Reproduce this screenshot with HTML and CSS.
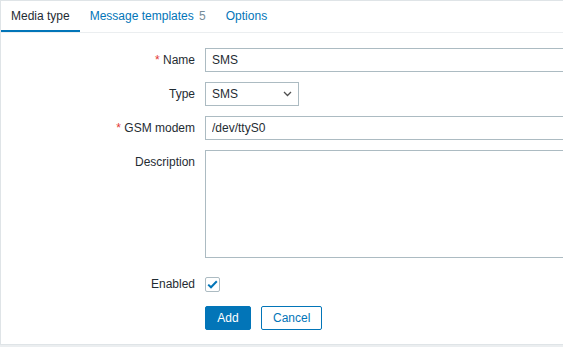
FILE: index.html
```html
<!DOCTYPE html>
<html lang="en">
<head>
    <meta charset="UTF-8">
    <title>Media type</title>
    <link rel="stylesheet" href="styles.css">
</head>
<body>
    <div class="container">
        <ul class="tabs">
            <li class="tab active">Media type</li>
            <li class="tab">Message templates <span class="count">5</span></li>
            <li class="tab">Options</li>
        </ul>
        <form class="form-grid">
            <label class="form-label"><span class="required">*</span> Name</label>
            <div class="form-field"><input type="text" class="text-input" value="SMS"></div>

            <label class="form-label">Type</label>
            <div class="form-field">
                <div class="select">
                    <span>SMS</span>
                    <svg width="9" height="6" viewBox="0 0 9 6"><path d="M1 1l3.5 3.5L8 1" fill="none" stroke="#4f4f4f" stroke-width="1.3"/></svg>
                </div>
            </div>

            <label class="form-label"><span class="required">*</span> GSM modem</label>
            <div class="form-field"><input type="text" class="text-input" value="/dev/ttyS0"></div>

            <label class="form-label label-top">Description</label>
            <div class="form-field"><textarea class="text-area"></textarea></div>

            <label class="form-label enabled-label">Enabled</label>
            <div class="form-field enabled-field">
                <span class="checkbox">
                    <svg width="11" height="9" viewBox="0 0 11 9"><path d="M1.2 4.6l2.8 2.7 5.8-6" fill="none" stroke="#0275b8" stroke-width="2"/></svg>
                </span>
            </div>

            <div></div>
            <div class="form-field buttons">
                <button type="button" class="btn btn-primary">Add</button>
                <button type="button" class="btn btn-alt">Cancel</button>
            </div>
        </form>
    </div>
</body>
</html>
```

FILE: styles.css
```css
* {
    margin: 0;
    padding: 0;
    box-sizing: border-box;
}

body {
    font-family: "Liberation Sans", Arial, sans-serif;
    font-size: 12px;
    color: #1f2c33;
    background-color: #ebeef0;
    overflow: hidden;
}

.container {
    width: 100%;
    height: 345px;
    background-color: #fff;
    border: 1px solid #dfe4e7;
    border-right: none;
    overflow: hidden;
}

.tabs {
    display: flex;
    list-style: none;
    height: 32px;
    border-bottom: 1px solid #ebeef0;
}

.tab {
    height: 31px;
    padding: 1px 10px 0;
    line-height: 28px;
    color: #0275b8;
    border-bottom: 2px solid transparent;
}

.tab.active {
    color: #1f2c33;
    border-bottom-color: #0275b8;
}

.tab .count {
    color: #768d99;
    margin-left: 2px;
}

.form-grid {
    display: grid;
    grid-template-columns: 194px 453px;
    column-gap: 10px;
    row-gap: 10px;
    padding-top: 15px;
}

.form-label {
    text-align: right;
    line-height: 24px;
}

.required {
    color: #e33734;
}

.text-input,
.text-area {
    display: block;
    width: 453px;
    height: 24px;
    padding: 0 6px;
    border: 1px solid #acbbc2;
    font-family: inherit;
    font-size: 12px;
    color: #1f2c33;
    background: #fff;
    outline: none;
}

.text-area {
    height: 108px;
    resize: none;
}

.select {
    display: flex;
    align-items: center;
    justify-content: space-between;
    width: 94px;
    height: 24px;
    padding: 0 6px;
    border: 1px solid #acbbc2;
}

.enabled-label,
.enabled-field {
    margin-top: 4px;
}

.enabled-field {
    display: flex;
    align-items: center;
    height: 24px;
}

.checkbox {
    display: flex;
    align-items: center;
    justify-content: center;
    width: 15px;
    height: 15px;
    border: 1px solid #acbbc2;
    border-radius: 2px;
}

.buttons {
    display: flex;
    gap: 10px;
}

.btn {
    height: 24px;
    padding: 0 11px;
    border-radius: 2px;
    font-family: inherit;
    font-size: 12px;
    cursor: pointer;
}

.btn-primary {
    background-color: #0275b8;
    border: 1px solid #0275b8;
    color: #fff;
    width: 46px;
}

.btn-alt {
    background-color: #fff;
    border: 1px solid #0275b8;
    color: #0275b8;
    width: 61px;
}
```
